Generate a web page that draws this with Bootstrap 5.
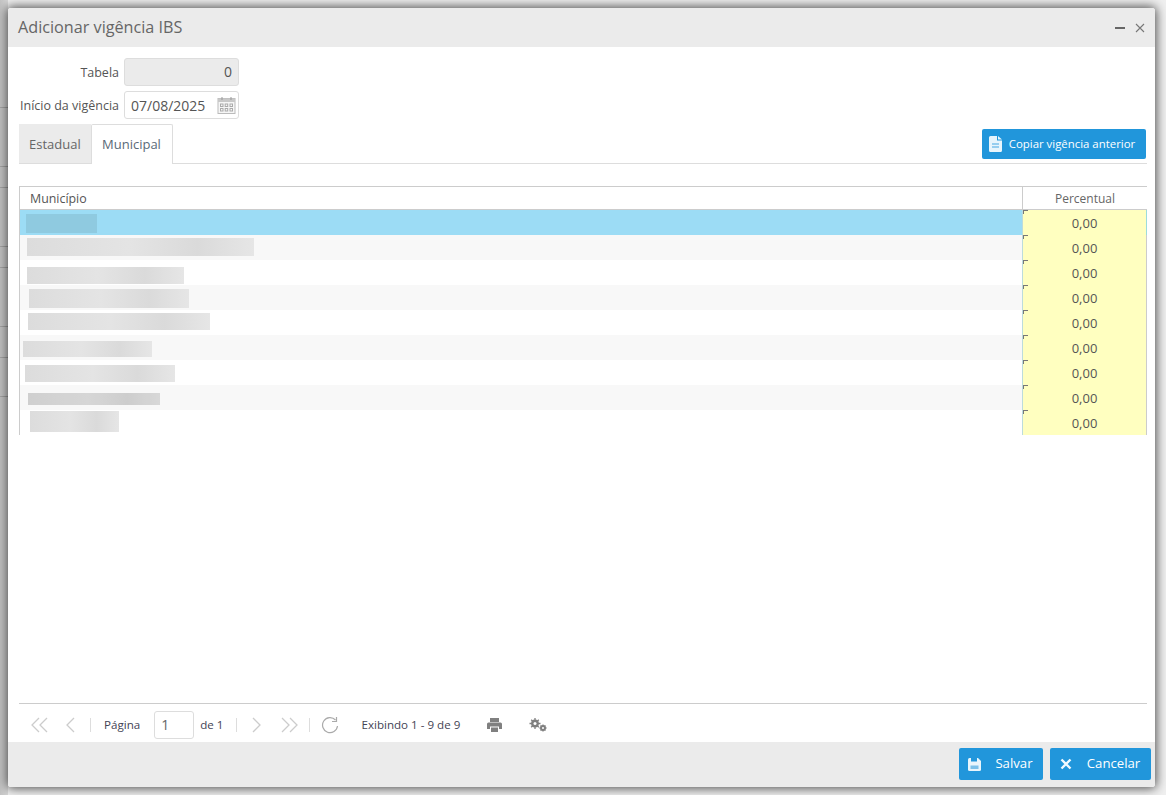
<!DOCTYPE html>
<html lang="pt-BR"><head><meta charset="utf-8"><title>Adicionar vigência IBS</title>
<link href="https://cdn.jsdelivr.net/npm/bootstrap@5.3.0/dist/css/bootstrap.min.css" rel="stylesheet">
<style>
html,body{height:795px;overflow:hidden}
body{font-family:"Open Sans",sans-serif;font-size:12px;color:#555;padding:8px 11px 8px 8px;
 background:
 linear-gradient(#a8a8a8,#a8a8a8) 0 107px/8px 1px no-repeat,linear-gradient(#a8a8a8,#a8a8a8) 0 166px/8px 1px no-repeat,
 linear-gradient(#a8a8a8,#a8a8a8) 0 187px/8px 1px no-repeat,linear-gradient(#a8a8a8,#a8a8a8) 0 246px/8px 1px no-repeat,
 linear-gradient(#a8a8a8,#a8a8a8) 0 267px/8px 1px no-repeat,linear-gradient(#a8a8a8,#a8a8a8) 0 326px/8px 1px no-repeat,
 linear-gradient(#a8a8a8,#a8a8a8) 0 357px/8px 1px no-repeat,linear-gradient(#a8a8a8,#a8a8a8) 0 396px/8px 1px no-repeat,
 linear-gradient(90deg,#c4c4c4 0,#d8d8d8 8px,#f0f0f0 8px) #f0f0f0}
.janela{height:779px;background:#fff;border-radius:3px;box-shadow:0 0 11px 1px rgba(0,0,0,.72);overflow:hidden}
.topo{height:39px;background:#ebebeb;padding:0 9px 0 10px;color:#666;font-size:16.2px}
.topo-acoes{gap:8px}
.topo-btn{width:12px;height:12px;display:block}
.corpo{padding:11px 8px 0 11px;min-height:0}
.rotulo{width:100px;text-align:right;margin:0 5px 0 0;padding-top:2px;color:#555;font-size:12.5px;white-space:nowrap}
.campo{width:115px;height:28px;border:1px solid #ddd;border-radius:3px;font-size:14px;color:#555;padding:0 6px;background:#fff}
.campo-ro{background:#ebebeb;text-align:right;padding-right:6px;line-height:26px}
.linha-form{margin-bottom:5px}
.cal{width:19px;height:18px;flex:none;margin-right:-4px}
.abas{width:1128px;height:40px;border-bottom:1px solid #ddd;margin-bottom:22px}
.aba{height:39px;line-height:41px;font-size:13px;color:#666;padding:0 10px;background:#ebebeb;width:72px}
.aba-on{background:#fff;border:1px solid #ddd;border-bottom:0;height:40px;width:82px;border-radius:2px 2px 0 0;line-height:39px;color:#5a6a78;position:relative;z-index:1;padding:0 10px}
.btn-az{background:#2196db;color:#fff;border:0;border-radius:2px;font-size:12px;padding:0;display:inline-flex;align-items:center;justify-content:center}
.btn-az:hover{background:#2196db;color:#fff}
.btn-copia{width:164px;height:30px;margin:5px 1px 0 0;gap:7px;font-size:11.4px;padding-right:4px}
.grade{width:1128px;table-layout:fixed;border-collapse:separate;border-spacing:0;flex:none}
.grade th{font-weight:400;height:24px;padding:2px 0 0;border-top:1px solid #ccc;border-bottom:1px solid #ccc;font-size:12.4px;color:#555}
.grade th:first-child{padding-left:10px;border-left:1px solid #ccc}
.grade th:last-child{text-align:center;border-left:1px solid #ccc;width:125px;color:#666;font-size:12px}
.grade td{height:25px;padding:0;vertical-align:top;line-height:25px}
.grade td:first-child{border-left:1px solid #ccc;line-height:0}
.grade td:last-child{background:#ffffc0;border-left:1px solid #bcdcdc;border-right:1px solid #ccc;text-align:center;line-height:26px;color:#555;font-size:13px;background-image:linear-gradient(#777,#777),linear-gradient(#777,#777);background-size:5px 1px,1px 4px;background-repeat:no-repeat;overflow:hidden}
.sel td:last-child{border-right-color:#9cdcdc}
.celula{display:block;height:25px;overflow:hidden}
.par td:first-child{background:#f8f8f8}
.sel td:first-child{background:#9cdcf5}
.borrao{display:block;background:linear-gradient(90deg,#dcdcdc,#e4e4e4 45%,#dadada 75%,#e6e6e6)}
.sel .borrao{background:#8fcae0}
.espaco{flex:1 1 auto}
.pager{width:1128px;height:39px;border-top:1px solid #ccc;font-size:11.6px;color:#445;flex:none;padding:4px 0 0 12px}
.sep{width:1px;height:14px;background:#ddd}
.pag-i{display:block;flex:none}
.pg-prim{margin-right:17px}.pg-ant{margin-right:15px}
.pg-sep1{margin-right:13px}
.pag-in{width:40px;height:28px;border:1px solid #ddd;border-radius:3px;font-size:14px;padding-left:6px;line-height:26px;color:#666;margin:0 6px 0 14px}
.pg-de{margin-right:13px}
.pg-prox{margin:0 19px 0 15px}
.pg-sep3{margin:0 11px 0 11px}
.pg-ref{margin-right:22px}
.pg-imp{margin:0 27px 0 27px}
.rodape{height:45px;background:#ebebeb;padding:6px 4px 0 0;gap:7px;flex:none}
.btn-salva{width:84px;height:32px;font-size:13.2px;gap:14px;padding-right:1px}
.btn-cancela{width:101px;height:32px;font-size:13.2px;gap:15px;padding-right:1px}
</style></head>
<body>
<div class="janela d-flex flex-column">
 <div class="topo d-flex align-items-center justify-content-between flex-none">
  <span>Adicionar vigência IBS</span>
  <div class="topo-acoes d-flex align-items-center">
   <svg class="topo-btn" viewBox="0 0 12 12"><rect x="1" y="5" width="10" height="2" fill="#666"/></svg>
   <svg class="topo-btn" viewBox="0 0 12 12"><path d="M2 2l8 8M10 2l-8 8" stroke="#777" stroke-width="1.100" fill="none"/></svg>
  </div>
 </div>
 <div class="corpo d-flex flex-column flex-grow-1">
  <div class="d-flex align-items-center linha-form"><label class="rotulo">Tabela</label><div class="campo campo-ro">0</div></div>
  <div class="d-flex align-items-center linha-form"><label class="rotulo">Início da vigência</label>
   <div class="campo d-flex align-items-center justify-content-between"><span>07/08/2025</span>
    <svg class="cal" viewBox="0 0 19 18"><rect x="1" y="2.500" width="17" height="15" fill="#f6f6f6" stroke="#bbb"/><rect x="1" y="2.500" width="17" height="3.500" fill="#c8c8c8"/><path d="M5 1v3M14 1v3" stroke="#999"/><g fill="none" stroke="#aaa"><rect x="3.500" y="8" width="2.500" height="2.500"/><rect x="8.200" y="8" width="2.500" height="2.500"/><rect x="13" y="8" width="2.500" height="2.500"/><rect x="3.500" y="12.500" width="2.500" height="2.500"/><rect x="8.200" y="12.500" width="2.500" height="2.500"/><rect x="13" y="12.500" width="2.500" height="2.500"/></g></svg>
   </div></div>
  <div class="abas d-flex justify-content-between">
   <div class="d-flex"><div class="aba">Estadual</div><div class="aba aba-on">Municipal</div></div>
   <button class="btn btn-az btn-copia"><svg width="13" height="16" viewBox="0 0 13 16"><path d="M0 1.500Q0 0 1.500 0H8v4.500h5v10q0 1.500-1.500 1.500h-10Q0 16 0 14.500z" fill="#e8f5fc"/><path d="M9 0l4 3.500H9z" fill="#e8f5fc"/><path d="M3 8h7M3 11h7" stroke="#7cc1ea" stroke-width="1.500"/></svg>Copiar vigência anterior</button>
  </div>
  <table class="grade"><thead><tr><th>Município</th><th>Percentual</th></tr></thead><tbody>
   <tr class="sel"><td><div class="celula"><span class="borrao" style="margin:4px 0 0 6px;width:71px;height:19px"></span></div></td><td><div class="celula">0,00</div></td></tr>
   <tr class="par"><td><div class="celula"><span class="borrao" style="margin:3px 0 0 7px;width:227px;height:18px"></span></div></td><td><div class="celula">0,00</div></td></tr>
   <tr><td><div class="celula"><span class="borrao" style="margin:7px 0 0 7px;width:157px;height:17px"></span></div></td><td><div class="celula">0,00</div></td></tr>
   <tr class="par"><td><div class="celula"><span class="borrao" style="margin:4px 0 0 9px;width:160px;height:19px"></span></div></td><td><div class="celula">0,00</div></td></tr>
   <tr><td><div class="celula"><span class="borrao" style="margin:3px 0 0 8px;width:182px;height:17px"></span></div></td><td><div class="celula">0,00</div></td></tr>
   <tr class="par"><td><div class="celula"><span class="borrao" style="margin:6px 0 0 3px;width:129px;height:16px"></span></div></td><td><div class="celula">0,00</div></td></tr>
   <tr><td><div class="celula"><span class="borrao" style="margin:5px 0 0 5px;width:150px;height:17px"></span></div></td><td><div class="celula">0,00</div></td></tr>
   <tr class="par"><td><div class="celula"><span class="borrao" style="margin:8px 0 0 8px;width:132px;height:12px;filter:brightness(.94)"></span></div></td><td><div class="celula">0,00</div></td></tr>
   <tr><td><div class="celula"><span class="borrao" style="margin:1px 0 0 10px;width:89px;height:21px"></span></div></td><td><div class="celula">0,00</div></td></tr>
  </tbody></table>
  <div class="espaco"></div>
  <div class="pager d-flex align-items-center">
   <svg class="pag-i pg-prim" width="17" height="16" viewBox="0 0 17 16"><path d="M8 1L1 8l7 7M16 1L9 8l7 7" stroke="#ccc" stroke-width="1.300" fill="none"/></svg>
   <svg class="pag-i pg-ant" width="10" height="16" viewBox="0 0 10 16"><path d="M9 1L2 8l7 7" stroke="#ccc" stroke-width="1.300" fill="none"/></svg>
   <span class="sep pg-sep1"></span><span>Página</span><div class="pag-in">1</div><span class="pg-de">de 1</span><span class="sep"></span>
   <svg class="pag-i pg-prox" width="10" height="16" viewBox="0 0 10 16"><path d="M1 1l7 7-7 7" stroke="#ccc" stroke-width="1.300" fill="none"/></svg>
   <svg class="pag-i" width="17" height="16" viewBox="0 0 17 16"><path d="M1 1l7 7-7 7M9 1l7 7-7 7" stroke="#ccc" stroke-width="1.300" fill="none"/></svg>
   <span class="sep pg-sep3"></span>
   <svg class="pag-i pg-ref" width="18" height="18" viewBox="0 0 18 18"><path d="M14.500 4A7.500 7.500 0 1 0 16.500 10" stroke="#aaa" stroke-width="1.200" fill="none"/><path d="M15.500 1v4.500H11" stroke="#aaa" stroke-width="1.200" fill="none"/></svg>
   <span>Exibindo 1 - 9 de 9</span>
   <svg class="pag-i pg-imp" width="15" height="14" viewBox="0 0 15 14"><path d="M3 0h9v4H3zM1.500 4.500h12Q15 4.500 15 6v5h-3V8.500H3V11H0V6q0-1.500 1.500-1.500zM4 9.500h7V14H4z" fill="#808080"/></svg>
   <svg class="pag-i" width="18" height="14" viewBox="0 0 18 14"><g fill="none" stroke="#808080"><circle cx="6" cy="5.500" r="2.700" stroke-width="2.400"/><circle cx="14" cy="10" r="1.900" stroke-width="2"/></g><path d="M6 0v11M.5 5.500h11M2.200 1.700l7.600 7.600M9.800 1.700L2.200 9.300M14 6.500v7M10.500 10h7M11.500 7.500l5 5M16.500 7.500l-5 5" stroke="#808080" stroke-width="1.300"/><circle cx="6" cy="5.500" r="1.500" fill="#fff"/><circle cx="14" cy="10" r="1" fill="#fff"/></svg>
  </div>
 </div>
 <div class="rodape d-flex justify-content-end">
  <button class="btn btn-az btn-salva"><svg width="13" height="13" viewBox="0 0 13 13"><path d="M1.500 0H10l3 3v8.500Q13 13 11.500 13h-10Q0 13 0 11.500v-10Q0 0 1.500 0z" fill="#e8f5fc"/><rect x="3" y="0" width="6" height="3.500" fill="#2196db"/><rect x="2.500" y="7.500" width="8" height="3.500" fill="#7cc1ea"/></svg>Salvar</button>
  <button class="btn btn-az btn-cancela"><svg width="12" height="12" viewBox="0 0 12 12"><path d="M1.500 1.500l9 9M10.500 1.500l-9 9" stroke="#f2faff" stroke-width="2.400"/></svg>Cancelar</button>
 </div>
</div>
<script src="https://cdn.jsdelivr.net/npm/bootstrap@5.3.0/dist/js/bootstrap.bundle.min.js"></script>
</body></html>
